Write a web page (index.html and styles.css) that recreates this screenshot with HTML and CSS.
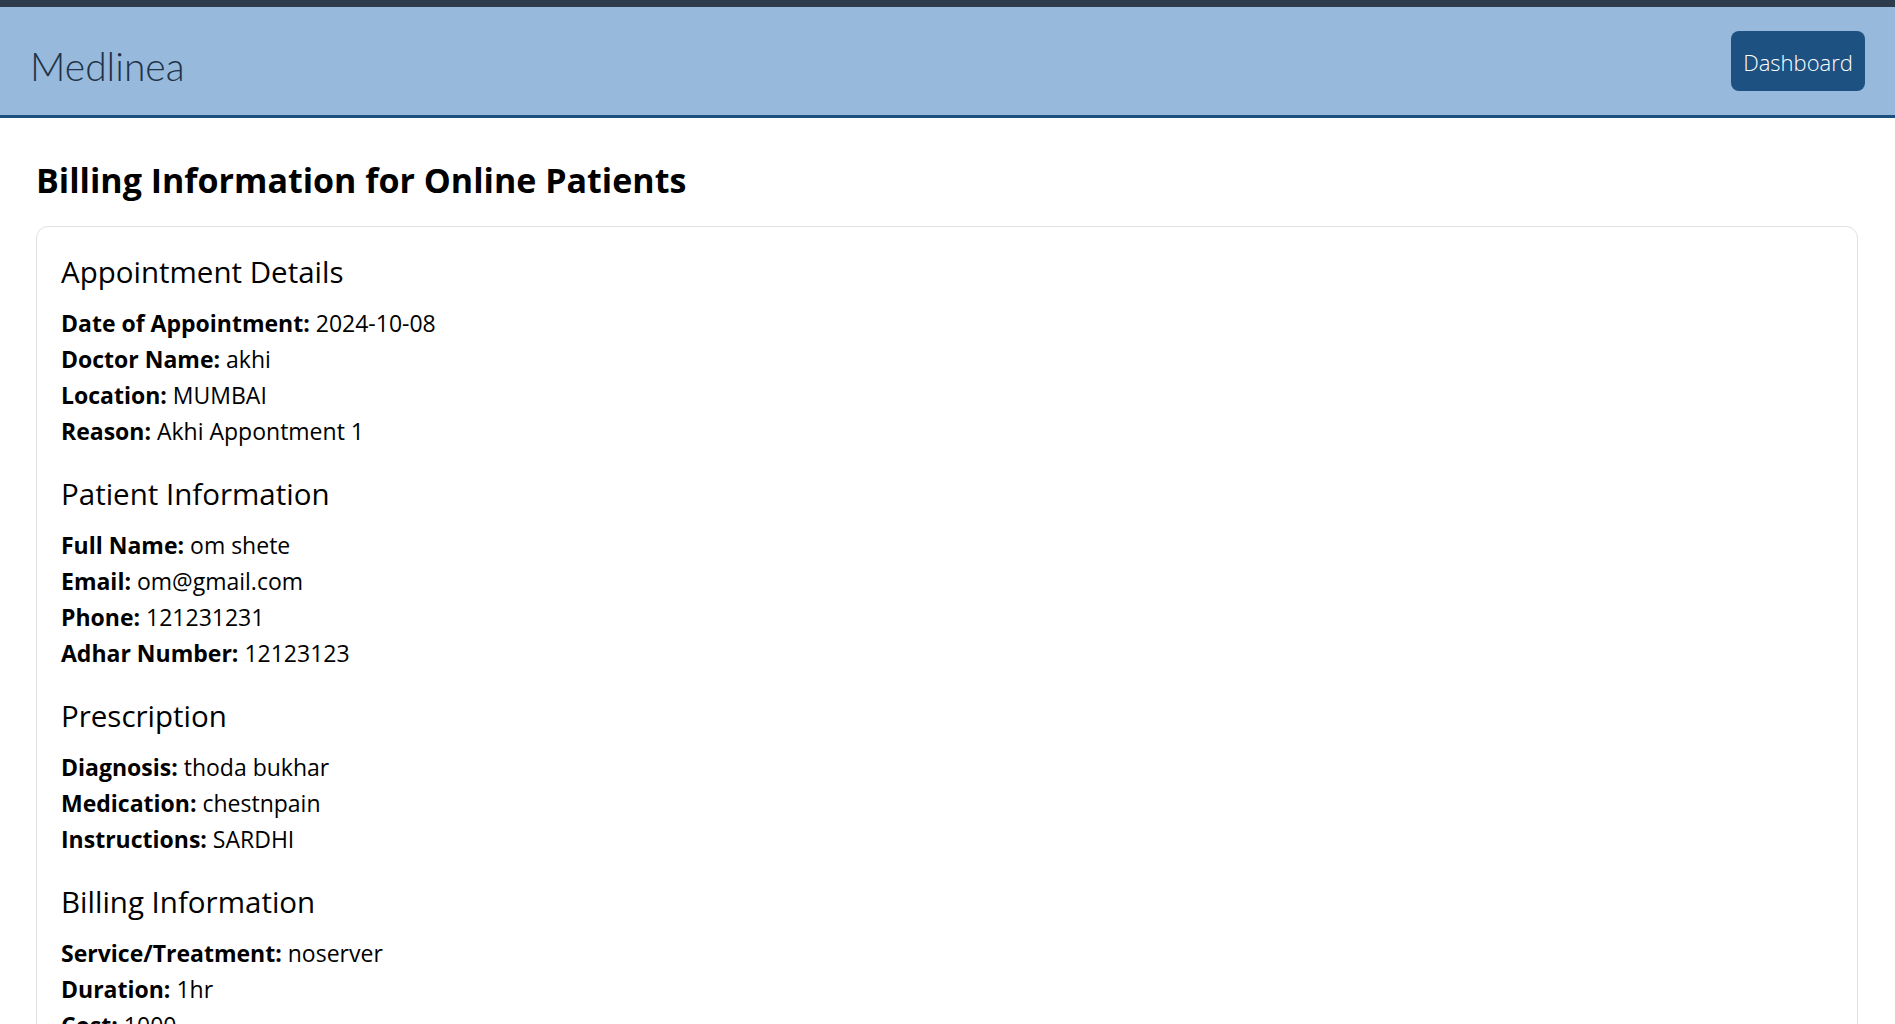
FILE: index.html
```html
<!DOCTYPE html>
<html lang="en">
<head>
<meta charset="utf-8">
<title>Billing Information</title>
<link rel="stylesheet" href="styles.css">
</head>
<body>
<header class="navbar">
  <a class="brand" href="#">Medlinea</a>
  <a class="btn-dashboard" href="#">Dashboard</a>
</header>
<main class="page">
  <h2 class="page-title">Billing Information for Online Patients</h2>
  <div class="card">
    <section class="section">
      <h4 class="section-title">Appointment Details</h4>
      <p class="row"><strong>Date of Appointment:</strong> 2024-10-08</p>
      <p class="row"><strong>Doctor Name:</strong> akhi</p>
      <p class="row"><strong>Location:</strong> MUMBAI</p>
      <p class="row"><strong>Reason:</strong> Akhi Appontment 1</p>
    </section>
    <section class="section">
      <h4 class="section-title">Patient Information</h4>
      <p class="row"><strong>Full Name:</strong> om shete</p>
      <p class="row"><strong>Email:</strong> om@gmail.com</p>
      <p class="row"><strong>Phone:</strong> 121231231</p>
      <p class="row"><strong>Adhar Number:</strong> 12123123</p>
    </section>
    <section class="section">
      <h4 class="section-title">Prescription</h4>
      <p class="row"><strong>Diagnosis:</strong> thoda bukhar</p>
      <p class="row"><strong>Medication:</strong> chestnpain</p>
      <p class="row"><strong>Instructions:</strong> SARDHI</p>
    </section>
    <section class="section">
      <h4 class="section-title">Billing Information</h4>
      <p class="row"><strong>Service/Treatment:</strong> noserver</p>
      <p class="row"><strong>Duration:</strong> 1hr</p>
      <p class="row"><strong>Cost:</strong> 1000</p>
    </section>
  </div>
</main>
</body>
</html>
```
FILE: styles.css
```css
* { box-sizing: border-box; }

html, body {
  margin: 0;
  padding: 0;
}

body {
  font-family: "Open Sans", "Noto Sans", sans-serif;
  font-size: 23px;
  color: #111;
  background: #fff;
}

.navbar {
  display: flex;
  align-items: center;
  justify-content: space-between;
  height: 118px;
  background: #96b9dc;
  border-top: 7px solid #2e3b4c;
  border-bottom: 3px solid #1d4e80;
  padding: 0 30px 0 30px;
}

.brand {
  font-family: "Lato", sans-serif;
  font-weight: 300;
  font-size: 39px;
  color: #1f3247;
  text-decoration: none;
  padding-top: 10px;
}

.btn-dashboard {
  display: flex;
  align-items: center;
  justify-content: center;
  width: 134px;
  height: 60px;
  background: #1d5182;
  color: #fff;
  border-radius: 8px;
  font-size: 22px;
  font-weight: 300;
  text-decoration: none;
  padding-top: 1px;
}

.page {
  padding: 41px 37px 40px 36px;
}

.page-title {
  margin: 0 0 25px;
  font-size: 34px;
  line-height: 42px;
  font-weight: 700;
  color: #000;
}

.card {
  border: 1px solid #e2e2e2;
  border-radius: 12px;
  padding: 27px 24px 40px;
}

.section + .section {
  margin-top: 27px;
}

.section-title {
  margin: 0 0 15px;
  font-size: 29.5px;
  line-height: 36px;
  font-weight: 400;
  color: #000;
}

.row {
  margin: 0;
  line-height: 36px;
  color: #000;
}

.row strong {
  font-weight: 700;
}
```
